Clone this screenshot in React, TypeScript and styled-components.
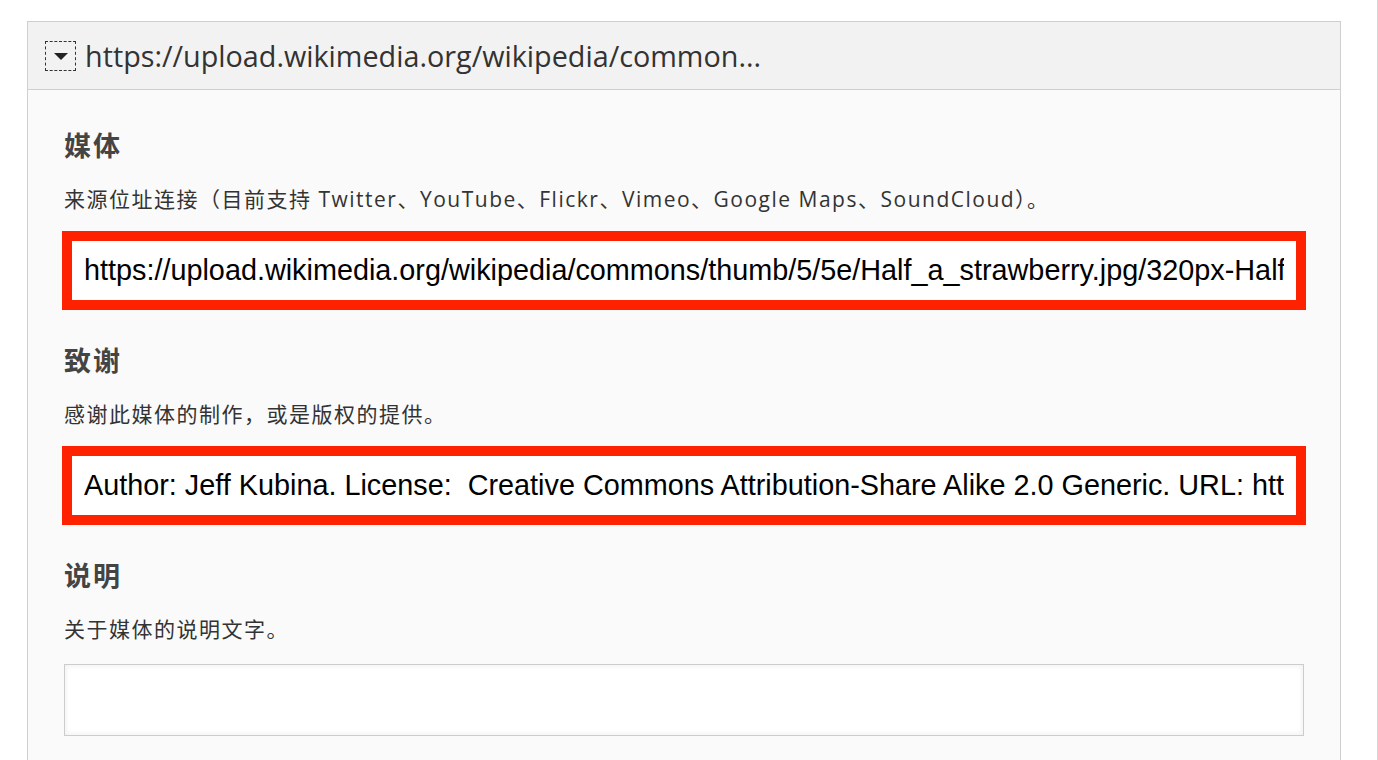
import styled, { createGlobalStyle } from 'styled-components'

const GlobalStyle = createGlobalStyle`
  html, body {
    margin: 0;
    padding: 0;
    background: #fff;
  }
  body {
    font-family: "Open Sans", "Noto Sans CJK SC", sans-serif;
    color: #333;
  }
`

type TField = {
  id: string,
  label: string,
  description: string,
  value: string,
  highlight: boolean,
  multiline: boolean
}

const fields: TField[] = [
  {
    id: 'media',
    label: '媒体',
    description: '来源位址连接（目前支持 Twitter、YouTube、Flickr、Vimeo、Google Maps、SoundCloud）。',
    value: 'https://upload.wikimedia.org/wikipedia/commons/thumb/5/5e/Half_a_strawberry.jpg/320px-Half_a_strawberry.jpg',
    highlight: true,
    multiline: false
  },
  {
    id: 'credit',
    label: '致谢',
    description: '感谢此媒体的制作，或是版权的提供。',
    value: 'Author: Jeff Kubina. License:  Creative Commons Attribution-Share Alike 2.0 Generic. URL: https://commons.wikimedia.org/wiki/File:Half_a_strawberry.jpg',
    highlight: true,
    multiline: false
  },
  {
    id: 'caption',
    label: '说明',
    description: '关于媒体的说明文字。',
    value: '',
    highlight: false,
    multiline: true
  }
]

function App() {
  return (
    <Page>
      <GlobalStyle />
      <Panel>
        <PanelHeader>
          <Toggle aria-label="collapse">
            <svg width="14" height="8" viewBox="0 0 14 8">
              <path d="M0 0 L14 0 L7 7 Z" fill="#222" />
            </svg>
          </Toggle>
          <HeaderTitle>https://upload.wikimedia.org/wikipedia/common...</HeaderTitle>
        </PanelHeader>
        <PanelBody>
          {fields.map(field =>
            <Field key={field.id}>
              <Label htmlFor={field.id}>{field.label}</Label>
              <Description>{field.description}</Description>
              {field.multiline
                ? <TextArea id={field.id} defaultValue={field.value} />
                : <Input id={field.id} $highlight={field.highlight} defaultValue={field.value} />}
            </Field>
          )}
        </PanelBody>
      </Panel>
    </Page>
  )
}
export default App

const Page = styled.div`
  box-sizing: border-box;
  width: 1378px;
  height: 760px;
  overflow: hidden;
  padding: 21px 0 0 27px;
  border-right: 1px solid #d6d6d6;
`

const Panel = styled.div`
  box-sizing: border-box;
  width: 1314px;
  border: 1px solid #cfcfcf;
  border-bottom: none;
`

const PanelHeader = styled.div`
  display: flex;
  align-items: center;
  height: 67px;
  padding-left: 17px;
  background: #f2f2f2;
  border-bottom: 1px solid #cfcfcf;
`

const Toggle = styled.button`
  box-sizing: border-box;
  display: flex;
  align-items: center;
  justify-content: center;
  width: 31px;
  height: 30px;
  padding: 2px 0 0;
  margin-right: 9px;
  border: 1px dashed #333;
  background: transparent;
  cursor: pointer;
`

const HeaderTitle = styled.span`
  font-family: "Open Sans", sans-serif;
  font-size: 28.75px;
  color: #333;
  white-space: nowrap;
`

const PanelBody = styled.div`
  padding: 38px 36px 0 36px;
  background: #fafafa;
  height: 700px;
`

const Field = styled.div`
  display: flex;
  flex-direction: column;
  height: 215px;
`

const Label = styled.label`
  font-family: "Open Sans", "Noto Sans CJK SC", sans-serif;
  font-size: 27px;
  font-weight: 700;
  line-height: 36px;
  letter-spacing: 2px;
  color: #444;
`

const Description = styled.p`
  margin: 21px 0 0;
  font-family: "Open Sans", "Noto Sans CJK SC", sans-serif;
  font-size: 21px;
  line-height: 28px;
  letter-spacing: 1.5px;
  color: #333;
`

const Input = styled.input<{ $highlight: boolean }>`
  box-sizing: border-box;
  width: 1240px;
  height: ${p => p.$highlight ? '75px' : '72px'};
  margin-top: 20px;
  padding: 0 19px;
  font-family: "Liberation Sans", Arial, sans-serif;
  font-size: 28.8px;
  color: #000;
  background: #fff;
  border: 1px solid #ccc;
  box-shadow: inset 0 1px 3px rgba(0, 0, 0, 0.08);
  outline: ${p => p.$highlight ? '10px solid #ff2200' : 'none'};
  outline-offset: -8px;
`

const TextArea = styled.textarea`
  box-sizing: border-box;
  width: 1240px;
  height: 72px;
  margin-top: 21px;
  padding: 10px 19px;
  font-family: "Liberation Sans", Arial, sans-serif;
  font-size: 28.8px;
  background: #fff;
  border: 1px solid #ccc;
  box-shadow: inset 0 0 6px rgba(0, 0, 0, 0.08);
  resize: none;
`
